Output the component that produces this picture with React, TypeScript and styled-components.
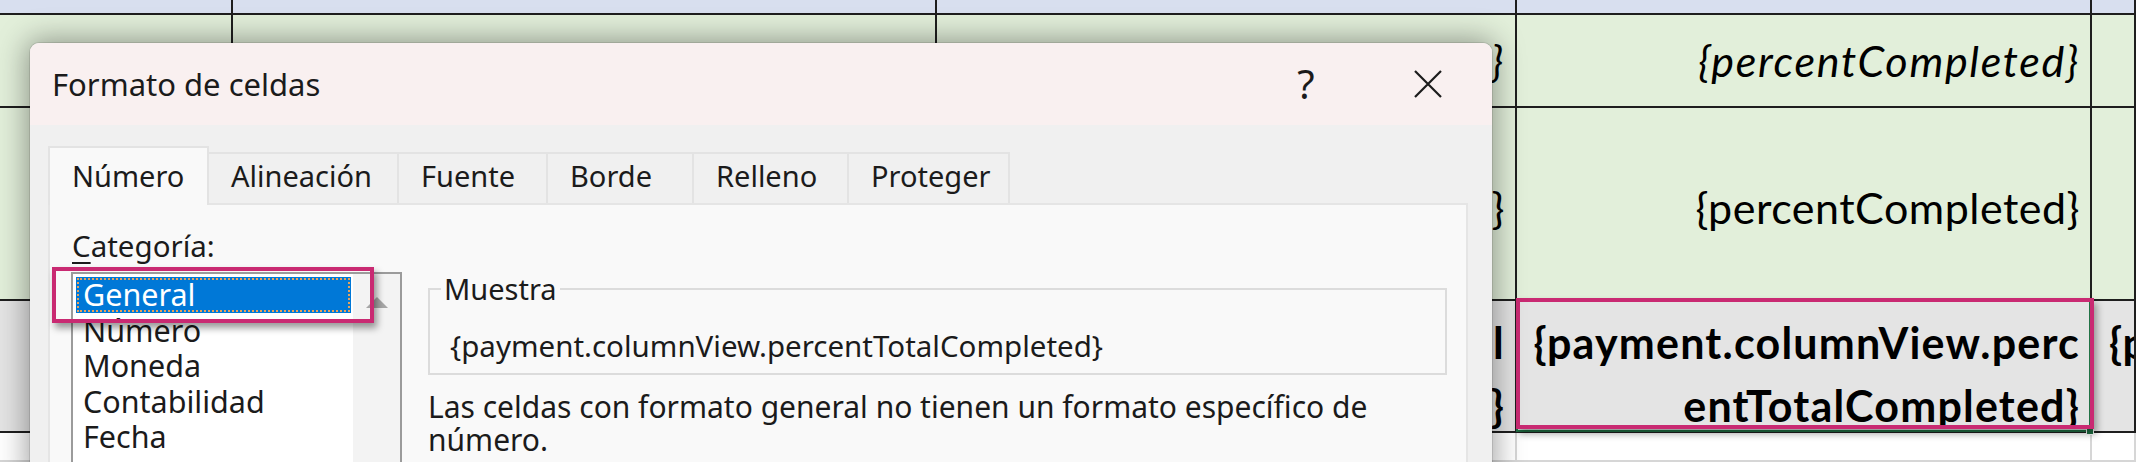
import styled, { createGlobalStyle } from "styled-components";

const GlobalStyle = createGlobalStyle`
  html, body {
    margin: 0;
    padding: 0;
    width: 2136px;
    height: 462px;
    overflow: hidden;
    background: #ffffff;
  }
  * {
    box-sizing: border-box;
  }
`;

const Screen = styled.div`
  position: relative;
  width: 2136px;
  height: 462px;
  overflow: hidden;
`;

/* ---------- hoja de cálculo de fondo ---------- */

const Sheet = styled.div`
  display: grid;
  grid-template-columns: 233px 704px 580px 575px 1fr;
  grid-template-rows: 15px 93px 193px 132px 1fr;
  height: 100%;
  font-family: Lato, "Liberation Sans", sans-serif;
  color: #000;
`;

type Tone = "band" | "green" | "gray" | "white";

const tones: Record<Tone, string> = {
  band: "#d8dfef",
  green: "#e2efda",
  gray: "#e4e4e4",
  white: "#ffffff",
};

const Cell = styled.div<{
  $tone: Tone;
  $italic?: boolean;
  $bold?: boolean;
  $left?: boolean;
  $stack?: boolean;
  $nudge?: number;
}>`
  position: relative;
  display: flex;
  flex-direction: column;
  justify-content: ${(p) => (p.$stack ? "flex-start" : "center")};
  align-items: ${(p) => (p.$left ? "flex-start" : "flex-end")};
  padding: ${(p) => (p.$stack ? 10 : p.$nudge ?? 0)}px ${(p) => (p.$left ? 0 : 10)}px 0
    ${(p) => (p.$left ? 17 : 0)}px;
  overflow: ${(p) => (p.$left ? "hidden" : "visible")};
  background: ${(p) => tones[p.$tone]};
  border-right: 2px solid ${(p) => (p.$tone === "white" ? "#d6d6d6" : "#1e1e1e")};
  border-bottom: 2px solid ${(p) => (p.$tone === "white" ? "#d6d6d6" : "#1e1e1e")};
  font-size: 43px;
  line-height: 63px;
  font-style: ${(p) => (p.$italic ? "italic" : "normal")};
  font-weight: ${(p) => (p.$bold ? 700 : 400)};
  letter-spacing: ${(p) => (p.$italic ? 1.7 : p.$bold ? 1.2 : 0.5)}px;
  white-space: nowrap;
`;

const WrapLine = styled.span`
  display: block;
  line-height: 63px;
`;

const SelectedCell = styled(Cell)`
  z-index: 2;
  &::before {
    content: "";
    position: absolute;
    inset: -1px -1px -1px -1px;
    border: 2px solid #217346;
  }
  &::after {
    content: "";
    position: absolute;
    left: -1px;
    top: -3px;
    right: -4px;
    bottom: 2px;
    border: 4px solid #c92a72;
    box-shadow: 3px 5px 7px rgba(0, 0, 0, 0.35);
  }
`;

const FillHandle = styled.span`
  position: absolute;
  right: -4px;
  bottom: -4px;
  width: 8px;
  height: 8px;
  background: #217346;
  border: 1px solid #ffffff;
`;

/* ---------- diálogo ---------- */

const Dialog = styled.section`
  position: absolute;
  left: 30px;
  top: 43px;
  width: 1462px;
  height: 440px;
  z-index: 5;
  display: flex;
  flex-direction: column;
  background: #f0f0f0;
  border-radius: 9px 9px 0 0;
  overflow: hidden;
  box-shadow: 0 0 30px 3px rgba(0, 0, 0, 0.38), 0 0 0 1px rgba(0, 0, 0, 0.1);
  font-family: "Segoe UI", "Noto Sans", sans-serif;
  color: #1b1b1b;
`;

const TitleBar = styled.header`
  display: flex;
  align-items: center;
  height: 82px;
  flex: none;
  padding-left: 22px;
  background: #f9f0f0;
`;

const Title = styled.h1`
  flex: 1;
  margin: 0;
  font-size: 31px;
  font-weight: 400;
  line-height: 40px;
`;

const CaptionButton = styled.button<{ $w: number }>`
  width: ${(p) => p.$w}px;
  height: 100%;
  display: flex;
  align-items: center;
  justify-content: center;
  padding: 0;
  border: 0;
  background: transparent;
  color: #1b1b1b;
  font-family: inherit;
  font-size: 40px;
  line-height: 1;
`;

const Body = styled.div`
  flex: 1;
  display: flex;
  flex-direction: column;
  padding: 21px 24px 0 18px;
`;

const TabStrip = styled.div`
  display: flex;
  align-items: flex-end;
  position: relative;
  z-index: 1;
`;

const Tab = styled.div<{ $w: number; $active?: boolean }>`
  width: ${(p) => p.$w}px;
  height: ${(p) => (p.$active ? 59 : 51)}px;
  margin-bottom: ${(p) => (p.$active ? -2 : 0)}px;
  display: flex;
  align-items: flex-end;
  padding: 0 0 ${(p) => (p.$active ? 12 : 10)}px 22px;
  background: ${(p) => (p.$active ? "#f9f9f9" : "#f0f0f0")};
  border: 2px solid #e3e3e3;
  border-bottom: 0;
  border-left-width: ${(p) => (p.$active ? 2 : 0)}px;
  font-size: 29px;
  line-height: 34px;
  white-space: nowrap;
`;

const Panel = styled.div`
  flex: 1;
  display: flex;
  gap: 26px;
  padding: 24px 19px 0 21px;
  background: #f9f9f9;
  border: 2px solid #e5e5e5;
  border-bottom: 0;
`;

const CategoryColumn = styled.div`
  width: 331px;
  flex: none;
  display: flex;
  flex-direction: column;
`;

const FieldLabel = styled.label`
  padding-left: 1px;
  margin-bottom: 9px;
  font-size: 29.5px;
  line-height: 34px;

  u {
    text-decoration-thickness: 2px;
    text-underline-offset: 5px;
  }
`;

const ListWrap = styled.div`
  position: relative;
  flex: 1;
`;

const ListBox = styled.div`
  height: 100%;
  display: flex;
  background: #ffffff;
  border: 2px solid #9b9b9b;
  border-bottom: 0;
`;

const Items = styled.ul`
  width: 278px;
  margin: 0;
  padding: 3px 0 0 3px;
  list-style: none;
`;

const Item = styled.li<{ $selected?: boolean }>`
  height: 35.5px;
  padding-left: 7px;
  font-size: 30.5px;
  line-height: 35.5px;
  color: ${(p) => (p.$selected ? "#ffffff" : "#1b1b1b")};
  background: ${(p) => (p.$selected ? "#0078d7" : "transparent")};
  outline: ${(p) => (p.$selected ? "2px dotted #e8a25a" : "none")};
  outline-offset: -3px;
`;

const ScrollTrack = styled.div`
  width: 47px;
  margin-left: 2px;
  display: flex;
  justify-content: center;
  padding-top: 23px;
  background: #f3f3f3;
`;

const ArrowUp = styled.span`
  width: 0;
  height: 0;
  border-left: 11px solid transparent;
  border-right: 11px solid transparent;
  border-bottom: 11px solid #a6a6a6;
`;

const Callout = styled.div`
  position: absolute;
  left: -19px;
  top: -5px;
  width: 322px;
  height: 56px;
  border: 4px solid #c92a72;
  box-shadow: 3px 5px 7px rgba(0, 0, 0, 0.4);
  pointer-events: none;
`;

const DetailColumn = styled.div`
  width: 1019px;
  flex: none;
  padding-top: 45px;
`;

const SampleBox = styled.fieldset`
  margin: 0;
  min-width: 0;
  padding: 0 0 10px 11px;
  border: 2px solid #dcdcdc;

  legend {
    padding: 0 3px;
    font-size: 29px;
    line-height: 30px;
  }
`;

const SampleValue = styled.div`
  padding: 25px 0 0 9px;
  font-size: 29.5px;
  line-height: 34px;
  white-space: nowrap;
`;

const Description = styled.p`
  margin: 15px 0 0;
  font-size: 30px;
  line-height: 33px;
`;

const tabs = [
  { label: "Número", w: 161 },
  { label: "Alineación", w: 190 },
  { label: "Fuente", w: 149 },
  { label: "Borde", w: 146 },
  { label: "Relleno", w: 155 },
  { label: "Proteger", w: 161 },
];

const categories = ["General", "Número", "Moneda", "Contabilidad", "Fecha"];

export default function App() {
  return (
    <>
      <GlobalStyle />
      <Screen>
        <Sheet>
          <Cell $tone="band" />
          <Cell $tone="band" />
          <Cell $tone="band" />
          <Cell $tone="band" />
          <Cell $tone="band" />

          <Cell $tone="green" />
          <Cell $tone="green" />
          <Cell $tone="green" $italic>
            {"{total}"}
          </Cell>
          <Cell $tone="green" $italic>
            {"{percentCompleted}"}
          </Cell>
          <Cell $tone="green" />

          <Cell $tone="green" />
          <Cell $tone="green" />
          <Cell $tone="green" $nudge={8}>
            {"{total}"}
          </Cell>
          <Cell $tone="green" $nudge={8}>
            {"{percentCompleted}"}
          </Cell>
          <Cell $tone="green" />

          <Cell $tone="gray" />
          <Cell $tone="gray" />
          <Cell $tone="gray" $bold $stack>
            <WrapLine>{"{payment.total"}</WrapLine>
            <WrapLine>{"Paid}"}</WrapLine>
          </Cell>
          <SelectedCell $tone="gray" $bold $stack>
            <WrapLine>{"{payment.columnView.perc"}</WrapLine>
            <WrapLine>{"entTotalCompleted}"}</WrapLine>
            <FillHandle />
          </SelectedCell>
          <Cell $tone="gray" $bold $left $stack>
            <WrapLine>{"{p"}</WrapLine>
          </Cell>

          <Cell $tone="white" />
          <Cell $tone="white" />
          <Cell $tone="white" />
          <Cell $tone="white" />
          <Cell $tone="white" />
        </Sheet>

        <Dialog>
          <TitleBar>
            <Title>Formato de celdas</Title>
            <CaptionButton $w={116}>?</CaptionButton>
            <CaptionButton $w={128} aria-label="Cerrar">
              <svg width="28" height="28" viewBox="0 0 28 28">
                <path d="M1 1 L27 27 M27 1 L1 27" stroke="#1b1b1b" strokeWidth="2.2" fill="none" />
              </svg>
            </CaptionButton>
          </TitleBar>

          <Body>
            <TabStrip>
              {tabs.map((t, i) => (
                <Tab key={t.label} $w={t.w} $active={i === 0}>
                  {t.label}
                </Tab>
              ))}
            </TabStrip>

            <Panel>
              <CategoryColumn>
                <FieldLabel>
                  <u>C</u>ategoría:
                </FieldLabel>
                <ListWrap>
                  <ListBox>
                    <Items>
                      {categories.map((c, i) => (
                        <Item key={c} $selected={i === 0}>
                          {c}
                        </Item>
                      ))}
                    </Items>
                    <ScrollTrack>
                      <ArrowUp />
                    </ScrollTrack>
                  </ListBox>
                  <Callout />
                </ListWrap>
              </CategoryColumn>

              <DetailColumn>
                <SampleBox>
                  <legend>Muestra</legend>
                  <SampleValue>{"{payment.columnView.percentTotalCompleted}"}</SampleValue>
                </SampleBox>
                <Description>
                  Las celdas con formato general no tienen un formato específico de número.
                </Description>
              </DetailColumn>
            </Panel>
          </Body>
        </Dialog>
      </Screen>
    </>
  );
}
